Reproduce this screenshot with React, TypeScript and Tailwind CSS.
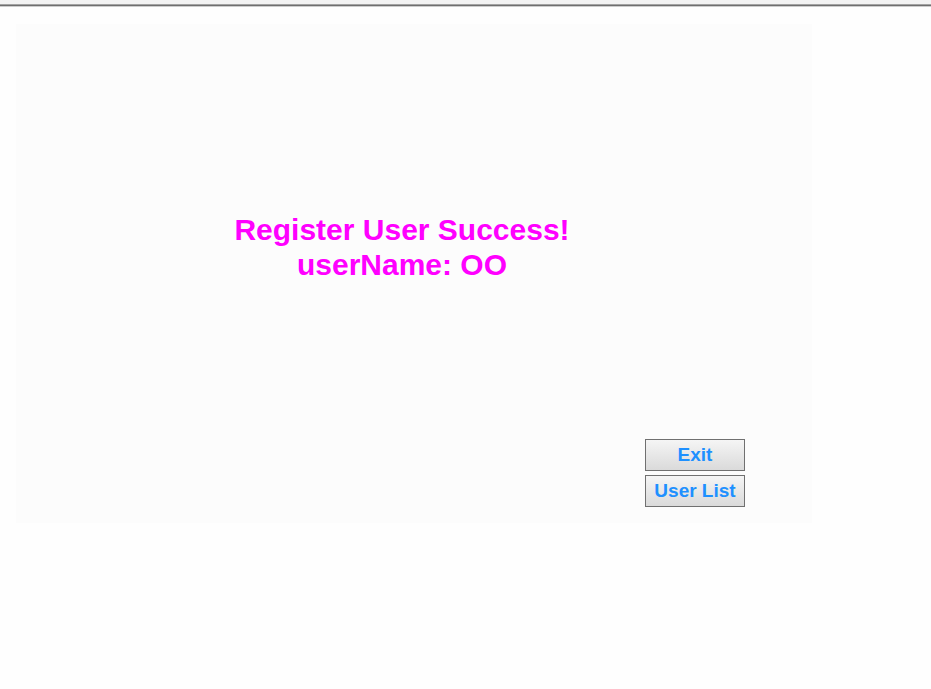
export default function App() {
  return (
    <div className="min-h-[689px] w-full bg-[#fefefe] font-['Liberation_Sans',Arial,sans-serif]">
      {/* top frame edge */}
      <div className="h-[4px] bg-[#f3f3f3]" />
      <div className="h-px bg-[#a3a3a3]" />
      <div className="h-px bg-[#6f6f6f]" />
      <div className="h-px bg-[#cdcdcd]" />

      <div className="ml-[16px] mt-[17px] flex h-[499px] w-[796px] flex-col bg-[#fcfcfc]">
        <div className="mt-[188px] w-[772px] text-center text-[30px] font-bold leading-[35px] text-[#ff00ff]">
          <div>Register User Success!</div>
          <div>userName: OO</div>
        </div>

        <div className="mt-[157px] flex flex-col items-end gap-[4px] pr-[67px]">
          <button className="h-[32px] w-[100px] border border-[#707070] bg-gradient-to-b from-[#f5f5f5] to-[#dadada] text-[19px] font-bold text-[#1e90ff]">
            Exit
          </button>
          <button className="h-[32px] w-[100px] border border-[#707070] bg-gradient-to-b from-[#f5f5f5] to-[#dadada] text-[19px] font-bold text-[#1e90ff]">
            User List
          </button>
        </div>
      </div>
    </div>
  );
}
